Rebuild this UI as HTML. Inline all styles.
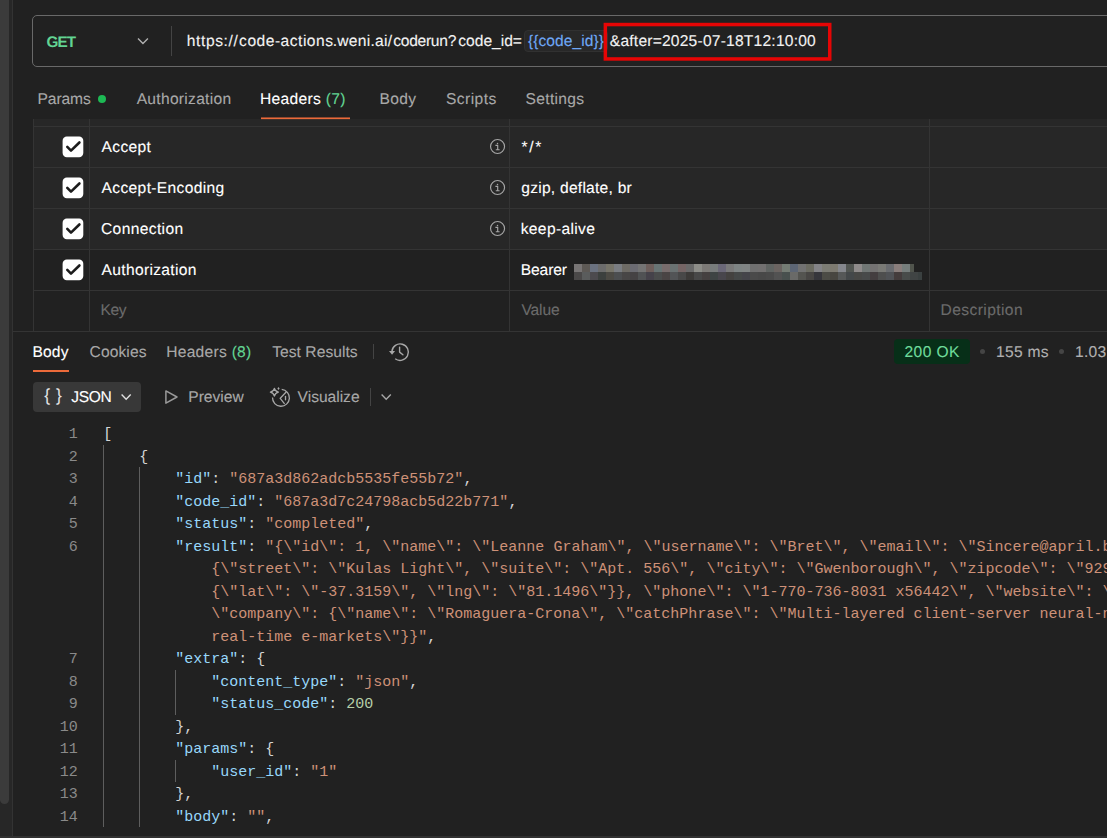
<!DOCTYPE html>
<html lang="en">
<head>
<meta charset="utf-8">
<title>Postman request</title>
<style>
*{box-sizing:border-box;margin:0;padding:0}
html,body{width:1107px;height:838px;overflow:hidden;background:#212121}
body{position:relative;font-family:"Liberation Sans",Arial,sans-serif;font-size:15px;color:#e8e8e8;-webkit-font-smoothing:antialiased}
.abs{position:absolute}
.t{position:absolute;white-space:nowrap;line-height:20px;height:20px;font-size:15.6px;-webkit-text-stroke:0.12px;text-rendering:geometricPrecision;margin-top:1px}
/* left & bottom chrome strips */
#lstrip{left:0;top:0;width:12px;height:838px;background:#272727}
#lthumb{left:0;top:-10px;width:9px;height:814px;background:#3b3b3b;border-radius:0 0 5px 5px}
#lline{left:12px;top:0;width:1px;height:836px;background:#333333}
#bstrip{left:0;top:836px;width:1107px;height:2px;background:#313131}
/* url bar */
#urlbox{left:32px;top:15px;width:1100px;height:52px;border:1px solid #696969;border-radius:5px}
#urldiv{left:171px;top:26px;width:1px;height:30px;background:#444}
#varpill{left:524px;top:30px;width:84px;height:22px;background:#282828;border:1px solid #313131;border-radius:4px}
/* tabs */
.tab{color:#a8a8a8}
.act{color:#ffffff}
.grn{color:#62d493}
.uline{height:2px;background:#ec6a3a}
/* table */
#tbl{left:33px;top:119px;width:1080px;height:130px;background:#272727}
.hl{position:absolute;left:33px;width:1080px;height:1px;background:#343434}
.vl{position:absolute;top:119px;width:1px;height:213px;background:#343434}
.cb{position:absolute;left:63px;width:20px;height:20px;background:#fff;border-radius:4px}
.cb svg{position:absolute;left:0;top:0}
.info{position:absolute;left:489px;width:16px;height:16px}
.ph{color:#6b6b6b}
/* response */
#okpill{left:894px;top:339px;width:76px;height:25px;background:#072f18;border-radius:4px}
.dot{position:absolute;width:5px;height:5px;border-radius:50%;background:#454545}
#jsonbtn{left:33px;top:382px;width:108px;height:30px;background:#383838;border-radius:4px}
/* code */
#code{left:0;top:0;width:1107px;height:838px;font-family:"Liberation Mono","DejaVu Sans Mono",monospace;font-size:15px}
.ln{position:absolute;left:30.7px;width:47px;text-align:right;color:#8a8a8a;height:22.5px;line-height:22.5px;white-space:pre}
.cl{position:absolute;height:22.5px;line-height:22.5px;white-space:pre;color:#d4d4d4}
.k{color:#98d8fb}
.s{color:#ce9178}
.n{color:#b5cea8}
.g{position:absolute;width:1px;background:#5e5e5e}
</style>
</head>
<body>
<!-- chrome strips -->
<div class="abs" id="lstrip"></div>
<div class="abs" id="lthumb"></div>
<div class="abs" id="lline"></div>

<!-- URL bar -->
<div class="abs" id="urlbox"></div>
<div class="t grn" id="get" style="left:46.4px;top:32px;font-weight:bold;font-size:15.3px;-webkit-text-stroke:0;letter-spacing:-0.84px">GET</div>
<div class="abs" id="urldiv"></div>
<div class="t" id="u1a" style="left:186.8px;top:31px;color:#f2f2f2;letter-spacing:0.59px">https://</div>
<div class="t" id="u1b" style="left:239.1px;top:31px;color:#f2f2f2;letter-spacing:0.50px">code-actions</div>
<div class="t" id="u1c" style="left:332.7px;top:31px;color:#f2f2f2;letter-spacing:0.28px">.weni.ai/</div>
<div class="t" id="u1d" style="left:393.3px;top:31px;color:#f2f2f2;letter-spacing:-0.30px">coderun</div>
<div class="t" id="u1e" style="left:447.8px;top:31px;color:#f2f2f2;letter-spacing:0.30px">?</div>
<div class="t" id="u1f" style="left:458.3px;top:31px;color:#f2f2f2;letter-spacing:-0.01px">code_id=</div>
<div class="abs" id="varpill"></div>
<div class="t" id="url2" style="left:527.9px;top:31px;color:#6ea7f5;letter-spacing:0.07px">{{code_id}}</div>
<div class="t" id="url3" style="left:609.8px;top:31px;color:#f2f2f2;letter-spacing:0.21px">&amp;after=2025-07-18T12:10:00</div>

<!-- request tabs -->
<div class="t tab" id="tb1" style="left:37.6px;top:89px;letter-spacing:-0.12px">Params</div>
<div class="abs" style="left:98px;top:95px;width:8px;height:8px;border-radius:50%;background:#1db954"></div>
<div class="t tab" id="tb2" style="left:136.7px;top:89px;letter-spacing:0.28px">Authorization</div>
<div class="t act" id="tb3" style="left:260.0px;top:89px;letter-spacing:0.32px">Headers <span class="grn">(7)</span></div>
<div class="t tab" id="tb4" style="left:379.6px;top:89px;letter-spacing:0.27px">Body</div>
<div class="t tab" id="tb5" style="left:446.0px;top:89px;letter-spacing:0.43px">Scripts</div>
<div class="t tab" id="tb6" style="left:525.6px;top:89px;letter-spacing:0.31px">Settings</div>

<!-- headers table -->
<div class="abs" id="tbl"></div>
<div class="hl" style="top:126px"></div>
<div class="hl" style="top:167px"></div>
<div class="hl" style="top:208px"></div>
<div class="hl" style="top:249px"></div>
<div class="hl" style="top:290px"></div>
<div class="hl" style="top:331px;left:13px;width:1100px"></div>
<div class="vl" style="left:33px"></div>
<div class="vl" style="left:89px"></div>
<div class="vl" style="left:509px"></div>
<div class="vl" style="left:929px"></div>


<div class="t act" id="k1" style="left:101.6px;top:137px;letter-spacing:0.30px">Accept</div>
<div class="t act" id="k2" style="left:101.6px;top:178px;letter-spacing:0.34px">Accept-Encoding</div>
<div class="t act" id="k3" style="left:101.0px;top:219px;letter-spacing:0.36px">Connection</div>
<div class="t act" id="k4" style="left:101.6px;top:260px;letter-spacing:0.31px">Authorization</div>
<div class="t ph" id="k5" style="left:100.6px;top:300px;letter-spacing:-0.46px">Key</div>


<div class="t act" id="v1" style="left:521.4px;top:137px;letter-spacing:1.68px">*/*</div>
<div class="t act" id="v2" style="left:521.3px;top:178px;letter-spacing:0.24px">gzip, deflate, br</div>
<div class="t act" id="v3" style="left:520.7px;top:219px;letter-spacing:0.35px">keep-alive</div>
<div class="t act" id="v4" style="left:520.7px;top:260px;letter-spacing:-0.09px">Bearer</div>
<div class="t ph" id="v5" style="left:521.4px;top:300px;letter-spacing:-0.12px">Value</div>
<div class="t ph" id="d5" style="left:940.5px;top:300px;letter-spacing:0.41px">Description</div>

<!-- response tabs -->
<div class="t act" id="r1" style="left:32.4px;top:342px;letter-spacing:0.19px">Body</div>
<div class="abs uline" style="left:33px;top:370px;width:36px"></div>
<div class="t tab" id="r2" style="left:89.6px;top:342px;letter-spacing:0.09px">Cookies</div>
<div class="t tab" id="r3" style="left:166.2px;top:342px;letter-spacing:0.27px">Headers <span class="grn">(8)</span></div>
<div class="t tab" id="r4" style="left:272.2px;top:342px;letter-spacing:0.05px">Test Results</div>
<div class="abs" style="left:373px;top:344px;width:1px;height:15px;background:#444"></div>

<div class="abs" id="okpill"></div>
<div class="t" id="ok" style="left:904.5px;top:342px;color:#6fdc9c;letter-spacing:0.40px">200 OK</div>
<div class="dot" style="left:980px;top:349px"></div>
<div class="t tab" id="ms" style="left:996.0px;top:342px;color:#b0b0b0;letter-spacing:0.29px">155 ms</div>
<div class="dot" style="left:1059px;top:349px"></div>
<div class="t tab" id="kb" style="left:1075px;top:342px;color:#b0b0b0;letter-spacing:0.3px">1.03 KB</div>

<!-- body toolbar -->
<div class="abs" id="jsonbtn"></div>
<div class="t" id="jb" style="left:44.2px;top:384px;font-size:17.5px;color:#e4e4e4;-webkit-text-stroke:0;letter-spacing:0.50px">{ }</div>
<div class="t act" id="js" style="left:71.3px;top:387px;letter-spacing:-0.40px">JSON</div>
<div class="t tab" id="pv" style="left:188.3px;top:387px;letter-spacing:-0.02px">Preview</div>
<div class="t tab" id="vz" style="left:297.6px;top:387px;letter-spacing:-0.02px">Visualize</div>
<div class="abs" style="left:370px;top:388px;width:1px;height:18px;background:#444"></div>

<!-- code -->
<!--CODE-START-->
<div class="abs" id="code">
<div class="ln" style="top:424.25px">1</div>
<div class="cl" style="left:103.3px;top:424.25px">[</div>
<div class="ln" style="top:446.75px">2</div>
<div class="cl" style="left:139.3px;top:446.75px">{</div>
<div class="ln" style="top:469.25px">3</div>
<div class="cl" style="left:175.3px;top:469.25px"><span class="k">"id"</span>: <span class="s">"687a3d862adcb5535fe55b72"</span>,</div>
<div class="ln" style="top:491.75px">4</div>
<div class="cl" style="left:175.3px;top:491.75px"><span class="k">"code_id"</span>: <span class="s">"687a3d7c24798acb5d22b771"</span>,</div>
<div class="ln" style="top:514.25px">5</div>
<div class="cl" style="left:175.3px;top:514.25px"><span class="k">"status"</span>: <span class="s">"completed"</span>,</div>
<div class="ln" style="top:536.75px">6</div>
<div class="cl" style="left:175.3px;top:536.75px"><span class="k">"result"</span>: <span class="s">"{\"id\": 1, \"name\": \"Leanne Graham\", \"username\": \"Bret\", \"email\": \"Sincere@april.biz\", \"address\": </span></div>
<div class="cl" style="left:211.3px;top:559.25px"><span class="s">{\"street\": \"Kulas Light\", \"suite\": \"Apt. 556\", \"city\": \"Gwenborough\", \"zipcode\": \"92998-3874\", \"geo\": </span></div>
<div class="cl" style="left:211.3px;top:581.75px"><span class="s">{\"lat\": \"-37.3159\", \"lng\": \"81.1496\"}}, \"phone\": \"1-770-736-8031 x56442\", \"website\": \"hildegard.org\", </span></div>
<div class="cl" style="left:211.3px;top:604.25px"><span class="s">\"company\": {\"name\": \"Romaguera-Crona\", \"catchPhrase\": \"Multi-layered client-server neural-net\", \"bs\": \"harness </span></div>
<div class="cl" style="left:211.3px;top:626.75px"><span class="s">real-time e-markets\"}}"</span>,</div>
<div class="ln" style="top:649.25px">7</div>
<div class="cl" style="left:175.3px;top:649.25px"><span class="k">"extra"</span>: {</div>
<div class="ln" style="top:671.75px">8</div>
<div class="cl" style="left:211.3px;top:671.75px"><span class="k">"content_type"</span>: <span class="s">"json"</span>,</div>
<div class="ln" style="top:694.25px">9</div>
<div class="cl" style="left:211.3px;top:694.25px"><span class="k">"status_code"</span>: <span class="n">200</span></div>
<div class="ln" style="top:716.75px">10</div>
<div class="cl" style="left:175.3px;top:716.75px">},</div>
<div class="ln" style="top:739.25px">11</div>
<div class="cl" style="left:175.3px;top:739.25px"><span class="k">"params"</span>: {</div>
<div class="ln" style="top:761.75px">12</div>
<div class="cl" style="left:211.3px;top:761.75px"><span class="k">"user_id"</span>: <span class="s">"1"</span></div>
<div class="ln" style="top:784.25px">13</div>
<div class="cl" style="left:175.3px;top:784.25px">},</div>
<div class="ln" style="top:806.75px">14</div>
<div class="cl" style="left:175.3px;top:806.75px"><span class="k">"body"</span>: <span class="s">""</span>,</div>
<div class="g" style="left:103px;top:444.75px;height:382.5px"></div>
<div class="g" style="left:139px;top:467.25px;height:360.0px"></div>
<div class="g" style="left:175px;top:669.75px;height:45.0px"></div>
<div class="g" style="left:175px;top:759.75px;height:22.5px"></div>
</div>
<!--CODE-END-->

<!-- icons overlay -->
<svg class="abs" id="icons" style="left:0;top:0" width="1107" height="838" viewBox="0 0 1107 838" fill="none">
<rect x="605.35" y="24.55" width="224.4" height="34.4" stroke="#e60505" stroke-width="3.5"/>
<!-- redacted token (pixelated) -->
<g shape-rendering="crispEdges"><rect x="574" y="264" width="8" height="8" fill="#787575"/><rect x="582" y="264" width="8" height="8" fill="#5d5955"/><rect x="590" y="264" width="8" height="8" fill="#6b7280"/><rect x="598" y="264" width="8" height="8" fill="#6c6c6c"/><rect x="606" y="264" width="8" height="8" fill="#77756a"/><rect x="614" y="264" width="8" height="8" fill="#7a7d82"/><rect x="622" y="264" width="8" height="8" fill="#6e6b65"/><rect x="630" y="264" width="8" height="8" fill="#6b6b72"/><rect x="638" y="264" width="8" height="8" fill="#747474"/><rect x="646" y="264" width="8" height="8" fill="#6e5f5c"/><rect x="654" y="264" width="8" height="8" fill="#687474"/><rect x="662" y="264" width="8" height="8" fill="#786c6c"/><rect x="670" y="264" width="8" height="8" fill="#6a7272"/><rect x="678" y="264" width="8" height="8" fill="#756565"/><rect x="686" y="264" width="8" height="8" fill="#6a6a6a"/><rect x="694" y="264" width="8" height="8" fill="#8d8d88"/><rect x="702" y="264" width="8" height="8" fill="#7d7a77"/><rect x="710" y="264" width="8" height="8" fill="#787c7c"/><rect x="718" y="264" width="8" height="8" fill="#6b6878"/><rect x="726" y="264" width="8" height="8" fill="#7a7a7a"/><rect x="734" y="264" width="8" height="8" fill="#7e8484"/><rect x="742" y="264" width="8" height="8" fill="#808484"/><rect x="750" y="264" width="8" height="8" fill="#707070"/><rect x="758" y="264" width="8" height="8" fill="#727070"/><rect x="766" y="264" width="8" height="8" fill="#606462"/><rect x="774" y="264" width="8" height="8" fill="#6b6461"/><rect x="782" y="264" width="8" height="8" fill="#747c74"/><rect x="790" y="264" width="8" height="8" fill="#5d6675"/><rect x="798" y="264" width="8" height="8" fill="#727272"/><rect x="806" y="264" width="8" height="8" fill="#6c6c62"/><rect x="814" y="264" width="8" height="8" fill="#838387"/><rect x="822" y="264" width="8" height="8" fill="#7c7c74"/><rect x="830" y="264" width="8" height="8" fill="#7d7a70"/><rect x="838" y="264" width="8" height="8" fill="#85878d"/><rect x="846" y="264" width="8" height="8" fill="#525652"/><rect x="854" y="264" width="8" height="8" fill="#8f8b8b"/><rect x="862" y="264" width="8" height="8" fill="#717775"/><rect x="870" y="264" width="8" height="8" fill="#747272"/><rect x="878" y="264" width="8" height="8" fill="#7a7a76"/><rect x="886" y="264" width="8" height="8" fill="#6a6c70"/><rect x="894" y="264" width="8" height="8" fill="#8a7e7c"/><rect x="902" y="264" width="8" height="8" fill="#767e7c"/><rect x="910" y="264" width="4" height="8" fill="#50544c"/><rect x="574" y="272" width="8" height="8" fill="#4a4848"/><rect x="582" y="272" width="8" height="8" fill="#5a5c5c"/><rect x="590" y="272" width="8" height="8" fill="#4c4a4e"/><rect x="598" y="272" width="8" height="8" fill="#3c403e"/><rect x="606" y="272" width="8" height="8" fill="#4c4a44"/><rect x="614" y="272" width="8" height="8" fill="#4c4e50"/><rect x="622" y="272" width="8" height="8" fill="#484646"/><rect x="630" y="272" width="8" height="8" fill="#454244"/><rect x="638" y="272" width="8" height="8" fill="#505254"/><rect x="646" y="272" width="8" height="8" fill="#45424a"/><rect x="654" y="272" width="8" height="8" fill="#4a4c4c"/><rect x="662" y="272" width="8" height="8" fill="#4a4444"/><rect x="670" y="272" width="8" height="8" fill="#525456"/><rect x="678" y="272" width="8" height="8" fill="#484848"/><rect x="686" y="272" width="8" height="8" fill="#3c3a38"/><rect x="694" y="272" width="8" height="8" fill="#484848"/><rect x="702" y="272" width="8" height="8" fill="#454040"/><rect x="710" y="272" width="8" height="8" fill="#3e4444"/><rect x="718" y="272" width="8" height="8" fill="#48464c"/><rect x="726" y="272" width="8" height="8" fill="#444240"/><rect x="734" y="272" width="8" height="8" fill="#454848"/><rect x="742" y="272" width="8" height="8" fill="#44444a"/><rect x="750" y="272" width="8" height="8" fill="#4a4a4a"/><rect x="758" y="272" width="8" height="8" fill="#484848"/><rect x="766" y="272" width="8" height="8" fill="#4a4a4a"/><rect x="774" y="272" width="8" height="8" fill="#525252"/><rect x="782" y="272" width="8" height="8" fill="#48504e"/><rect x="790" y="272" width="8" height="8" fill="#6a6a68"/><rect x="798" y="272" width="8" height="8" fill="#545450"/><rect x="806" y="272" width="8" height="8" fill="#484644"/><rect x="814" y="272" width="8" height="8" fill="#36363c"/><rect x="822" y="272" width="8" height="8" fill="#4c4c46"/><rect x="830" y="272" width="8" height="8" fill="#484640"/><rect x="838" y="272" width="8" height="8" fill="#565858"/><rect x="846" y="272" width="8" height="8" fill="#44484a"/><rect x="854" y="272" width="8" height="8" fill="#484846"/><rect x="862" y="272" width="8" height="8" fill="#484a4a"/><rect x="870" y="272" width="8" height="8" fill="#443e40"/><rect x="878" y="272" width="8" height="8" fill="#4e4e4e"/><rect x="886" y="272" width="8" height="8" fill="#505256"/><rect x="894" y="272" width="8" height="8" fill="#443c3c"/><rect x="902" y="272" width="8" height="8" fill="#484c4a"/><rect x="910" y="272" width="8" height="8" fill="#404444"/><rect x="918" y="272" width="4" height="8" fill="#3a4040"/></g>
<rect x="261" y="117.45" width="89" height="1.7" fill="#ec6a3a"/>
<!-- method chevron -->
<path d="M138 38.4 L142.95 43.4 L147.9 38.4" stroke="#b0b0b0" stroke-width="1.4"/>
<!-- checkboxes -->
<g transform="translate(0 0)"><rect x="62.6" y="136.6" width="20.7" height="20.7" rx="4.2" fill="#ffffff"/><path d="M67.3 146.9 L71 150.6 L79.4 142.5" stroke="#1c1c1c" stroke-width="2.6" stroke-linecap="round" stroke-linejoin="round"/></g>
<g transform="translate(0 41)"><rect x="62.6" y="136.6" width="20.7" height="20.7" rx="4.2" fill="#ffffff"/><path d="M67.3 146.9 L71 150.6 L79.4 142.5" stroke="#1c1c1c" stroke-width="2.6" stroke-linecap="round" stroke-linejoin="round"/></g>
<g transform="translate(0 82)"><rect x="62.6" y="136.6" width="20.7" height="20.7" rx="4.2" fill="#ffffff"/><path d="M67.3 146.9 L71 150.6 L79.4 142.5" stroke="#1c1c1c" stroke-width="2.6" stroke-linecap="round" stroke-linejoin="round"/></g>
<g transform="translate(0 123)"><rect x="62.6" y="136.6" width="20.7" height="20.7" rx="4.2" fill="#ffffff"/><path d="M67.3 146.9 L71 150.6 L79.4 142.5" stroke="#1c1c1c" stroke-width="2.6" stroke-linecap="round" stroke-linejoin="round"/></g>
<!-- info icons -->
<g transform="translate(0 0)" stroke="#a6a6a6" stroke-width="1.15"><circle cx="497.55" cy="146.5" r="7"/><path d="M495.4 145.4h2.3v4.2M495.8 149.7h3.8" /><circle cx="497.5" cy="143.5" r="0.75" fill="#a6a6a6" stroke="none"/></g>
<g transform="translate(0 41)" stroke="#a6a6a6" stroke-width="1.15"><circle cx="497.55" cy="146.5" r="7"/><path d="M495.4 145.4h2.3v4.2M495.8 149.7h3.8" /><circle cx="497.5" cy="143.5" r="0.75" fill="#a6a6a6" stroke="none"/></g>
<g transform="translate(0 82)" stroke="#a6a6a6" stroke-width="1.15"><circle cx="497.55" cy="146.5" r="7"/><path d="M495.4 145.4h2.3v4.2M495.8 149.7h3.8" /><circle cx="497.5" cy="143.5" r="0.75" fill="#a6a6a6" stroke="none"/></g>
<!-- history icon -->
<g stroke="#a8a8a8" stroke-width="1.4">
<path d="M391.9 351.4 A8.25 8.25 0 1 1 395.2 358.8"/>
<path d="M399.6 347.1 V352.1 L402.9 354.7" stroke-linecap="round" stroke-linejoin="round"/>
<path d="M389 351 H395.1 L392.05 354.8 Z" fill="#a8a8a8" stroke="none"/>
</g>
<!-- json chevron -->
<path d="M121.6 394.6 L126.15 399.3 L130.7 394.6" stroke="#e0e0e0" stroke-width="1.4"/>
<!-- preview play icon -->
<path d="M165.9 390.9 L177 397 L165.9 403.2 Z" stroke="#9a9a9a" stroke-width="1.5" stroke-linejoin="round"/>
<!-- visualize icon -->
<g stroke="#a8a8a8" stroke-width="1.3">
<path d="M281.7 389.4 A8.45 8.45 0 1 1 272.5 397.6"/>
<path d="M286.4 391.8 L280.2 398.3 L284.6 403.9" stroke-linejoin="miter"/>
<path d="M285.5 396.5 V399.8" stroke-linecap="round"/>
<path d="M274.4 388.3 Q275.2 391.4 278.4 392.2 Q275.2 393 274.4 396 Q273.6 393 270.4 392.2 Q273.6 391.4 274.4 388.3 Z" stroke-width="1.3" stroke-linejoin="round"/>
<path d="M278.5 387.1 L279.6 388.6 L278.5 390.1 L277.4 388.6 Z" fill="#a8a8a8" stroke="none"/>
</g>
<!-- visualize chevron -->
<path d="M381.6 394.6 L386.2 399.3 L390.8 394.6" stroke="#a8a8a8" stroke-width="1.4"/>
</svg>

<div class="abs" id="bstrip"></div>
</body>
</html>
